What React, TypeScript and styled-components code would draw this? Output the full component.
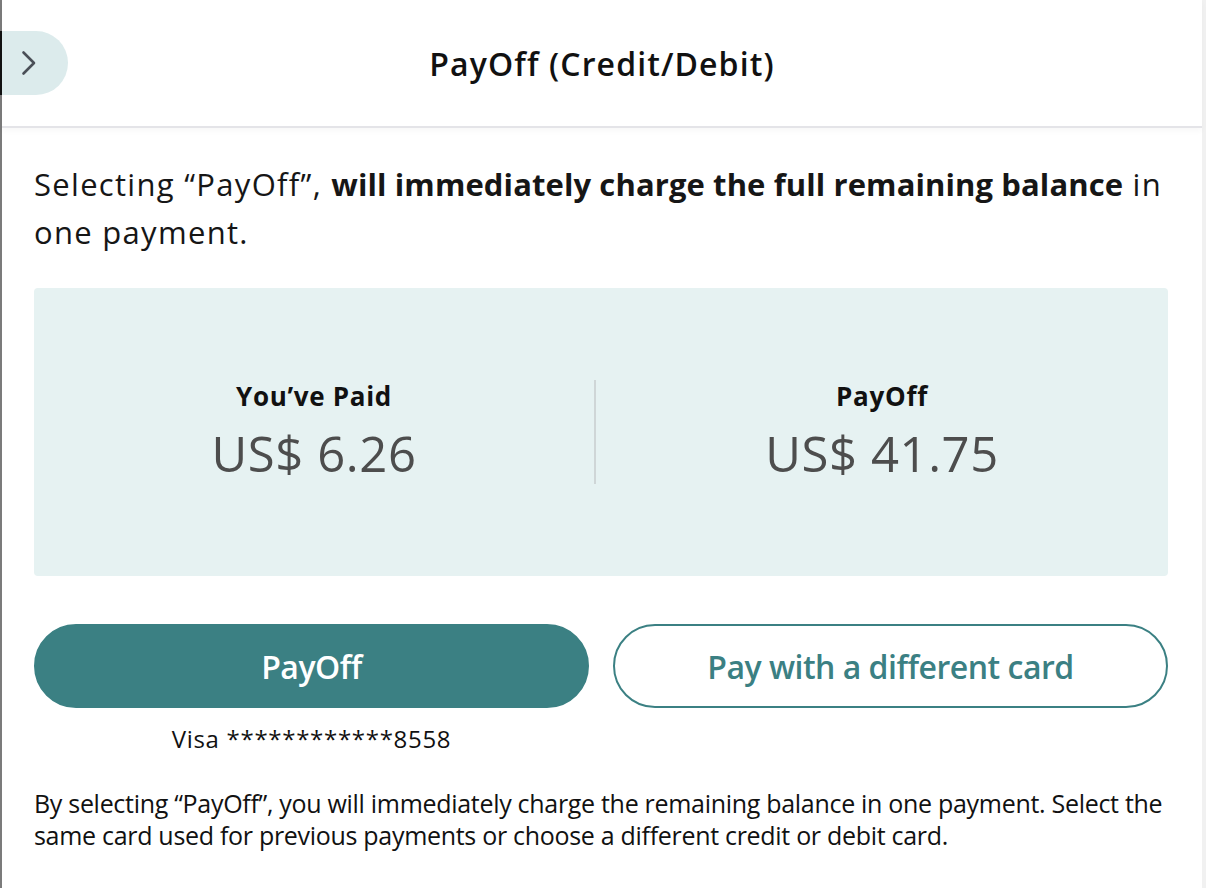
import styled, { createGlobalStyle } from 'styled-components';

const colors = {
    teal: '#3b8083',
    panel: '#e6f2f2',
    pill: '#dcebec',
    text: '#161616',
    amount: '#4d4d4d',
    divider: '#cfd6d7',
    line: '#e4e4e8',
};

const GlobalStyle = createGlobalStyle`
    html, body {
        margin: 0;
        padding: 0;
        background: #ffffff;
    }
    body {
        font-family: "Open Sans", "Noto Sans", sans-serif;
        color: ${colors.text};
    }
`;

const ChevronRight = () => (
    <svg width="16" height="26" viewBox="0 0 16 26" fill="none">
        <path d="M2.5 2.5l10.5 10.5-10.5 10.5" stroke="#4a4f57" strokeWidth="2.6" strokeLinecap="round" strokeLinejoin="round" />
    </svg>
);

export default function App() {
    return (
        <>
            <GlobalStyle />
            <Styled.Page>
                <Styled.Header>
                    <Styled.BackPill aria-label="back">
                        <ChevronRight />
                    </Styled.BackPill>
                    <Styled.Title>PayOff (Credit/Debit)</Styled.Title>
                </Styled.Header>
                <Styled.Body>
                    <Styled.Intro>
                        Selecting “PayOff”, <strong>will immediately charge the full remaining balance</strong> in one payment.
                    </Styled.Intro>
                    <Styled.Summary>
                        <Styled.Column>
                            <Styled.Label>You’ve Paid</Styled.Label>
                            <Styled.Amount>US$ 6.26</Styled.Amount>
                        </Styled.Column>
                        <Styled.Divider />
                        <Styled.Column>
                            <Styled.Label>PayOff</Styled.Label>
                            <Styled.Amount>US$ 41.75</Styled.Amount>
                        </Styled.Column>
                    </Styled.Summary>
                    <Styled.Actions>
                        <Styled.ActionCell>
                            <Styled.Button $filled>PayOff</Styled.Button>
                            <Styled.CardNumber>Visa ************8558</Styled.CardNumber>
                        </Styled.ActionCell>
                        <Styled.ActionCell>
                            <Styled.Button>Pay with a different card</Styled.Button>
                        </Styled.ActionCell>
                    </Styled.Actions>
                    <Styled.Note>
                        By selecting “PayOff”, you will immediately charge the remaining balance in one payment. Select the same card used for previous payments or choose a different credit or debit card.
                    </Styled.Note>
                </Styled.Body>
            </Styled.Page>
        </>
    );
}

const Styled = {
    Page: styled.div`
        min-height: 888px;
        box-sizing: border-box;
        border-left: 2px solid #7b7b7b;
        border-right: 4px solid #f1f1f1;
        background: #ffffff;
    `,
    Header: styled.header`
        height: 128px;
        box-sizing: border-box;
        display: flex;
        align-items: center;
        justify-content: center;
        position: relative;
        border-bottom: 2px solid ${colors.line};
        box-shadow: 0 3px 6px rgba(0, 0, 0, 0.03);
    `,
    BackPill: styled.button`
        position: absolute;
        left: -2px;
        top: 31px;
        width: 68px;
        height: 64px;
        border: none;
        border-left: 2px solid #111111;
        padding: 0 0 0 19px;
        background: ${colors.pill};
        border-radius: 0 32px 32px 0;
        display: flex;
        align-items: center;
        justify-content: flex-start;
        cursor: pointer;
    `,
    Title: styled.h1`
        margin: 0;
        font-size: 32px;
        font-weight: 600;
        letter-spacing: 1.1px;
        color: #111111;
    `,
    Body: styled.main`
        padding: 32px 34px 0 32px;
    `,
    Intro: styled.p`
        margin: 0;
        font-size: 31px;
        line-height: 48px;
        letter-spacing: 1.3px;
        strong {
            font-weight: 700;
            letter-spacing: 0.1px;
        }
    `,
    Summary: styled.section`
        margin-top: 32px;
        height: 288px;
        background: ${colors.panel};
        border-radius: 4px;
        display: grid;
        grid-template-columns: 560px 2px 1fr;
        align-items: center;
    `,
    Column: styled.div`
        display: flex;
        flex-direction: column;
        align-items: center;
        gap: 6px;
    `,
    Label: styled.div`
        font-size: 26px;
        font-weight: 700;
        letter-spacing: 0.7px;
        color: #111111;
    `,
    Amount: styled.div`
        font-size: 49px;
        font-weight: 400;
        color: ${colors.amount};
        letter-spacing: 0.6px;
    `,
    Divider: styled.div`
        width: 2px;
        height: 104px;
        background: ${colors.divider};
    `,
    Actions: styled.div`
        margin-top: 48px;
        display: grid;
        grid-template-columns: 1fr 1fr;
        gap: 24px;
    `,
    ActionCell: styled.div`
        display: flex;
        flex-direction: column;
        align-items: center;
    `,
    Button: styled.button<{ $filled?: boolean }>`
        width: 100%;
        height: 84px;
        border-radius: 42px;
        box-sizing: border-box;
        border: 2px solid ${colors.teal};
        background: ${(p) => (p.$filled ? colors.teal : '#ffffff')};
        color: ${(p) => (p.$filled ? '#ffffff' : colors.teal)};
        font-family: "Open Sans", "Noto Sans", sans-serif;
        font-size: 32px;
        font-weight: 600;
        letter-spacing: -0.5px;
        cursor: pointer;
    `,
    CardNumber: styled.div`
        margin-top: 14px;
        font-size: 24px;
        line-height: 33px;
        letter-spacing: 0.7px;
        color: #111111;
    `,
    Note: styled.p`
        margin: 32px 0 0;
        font-size: 25px;
        line-height: 32px;
        letter-spacing: -0.3px;
        color: #111111;
    `,
};
